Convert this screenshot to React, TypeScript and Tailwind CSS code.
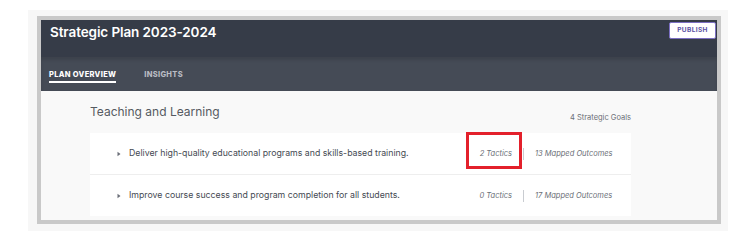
import React from "react";

function Tri() {
  return (
    <svg width="4" height="6" viewBox="0 0 4 6" className="shrink-0">
      <path d="M0.5 0.8 L3.5 3 L0.5 5.2 Z" fill="#6b6f78" />
    </svg>
  );
}

function Row({ text, tactics, outcomes, highlight }: { text: string; tactics: string; outcomes: string; highlight?: boolean }) {
  return (
    <div className="relative flex items-center h-[41px] pl-[27px] pr-[18px]">
      <Tri />
      <span className="ml-[8px] text-[8.75px] text-[#454a52] flex-1">{text}</span>
      <span className="w-[60px] text-right italic text-[7.5px] text-[#6b6f77]">{tactics}</span>
      <span className="mx-[11px] w-px h-[12px] bg-[#c9ccd1]" />
      <span className="w-[78px] italic text-[7.5px] text-[#6b6f77] whitespace-nowrap">{outcomes}</span>
      {highlight && (
        <div className="absolute left-[376px] top-[-1px] w-[56px] h-[37px] border-[3px] border-[#e3202b]" />
      )}
    </div>
  );
}

export default function App() {
  return (
    <div className="w-[743px] h-[241px] bg-white pt-[10px] pl-[28px]" style={{ fontFamily: "Inter, 'Noto Sans', sans-serif" }}>
      <div className="w-[700px] h-[221px] bg-[#f7f7f7] pt-[6px] pl-[9px]">
        <div className="w-[684px] h-[208px] border-4 border-[#c9c9c9] bg-[#f9f9f9] overflow-hidden flex flex-col">
          <div className="h-[37px] bg-[#363c48] flex items-start justify-between pl-[9px] pr-px shrink-0">
            <div className="mt-[1px] text-white font-semibold text-[13.5px] leading-[22px] tracking-[-0.1px]">Strategic Plan 2023-2024</div>
            <div className="mt-[2px] w-[47px] h-[17px] bg-white border border-[#7b6fc2] rounded-[2px] flex items-center justify-center text-[6.5px] font-bold text-[#5b4fa3] tracking-[0.4px]">
              PUBLISH
            </div>
          </div>
          <div className="h-[34px] bg-[#454b56] flex items-center pl-[8px] gap-[28px] shrink-0 shadow-[inset_0_3px_3px_rgba(0,0,0,0.12)]">
            <div className="relative text-white text-[7.5px] font-extrabold tracking-[0.3px] pt-[2px]">
              PLAN OVERVIEW
              <div className="absolute left-0 right-0 top-[14px] h-[2px] bg-white" />
            </div>
            <div className="text-[#b9bcc3] text-[7.5px] font-extrabold tracking-[0.3px] pt-[2px]">INSIGHTS</div>
          </div>
          <div className="flex-1 pl-[49px] pr-[86px] pt-[13px]">
            <div className="flex items-end justify-between h-[16px]">
              <div className="text-[12px] text-[#555a61] leading-[16px]">Teaching and Learning</div>
              <div className="text-[7.5px] text-[#6b6f77] mb-[-3px]">4 Strategic Goals</div>
            </div>
            <div className="mt-[13px] bg-white">
              <Row text="Deliver high-quality educational programs and skills-based training." tactics="2 Tactics" outcomes="13 Mapped Outcomes" highlight />
              <div className="h-px bg-[#eeeeee]" />
              <Row text="Improve course success and program completion for all students." tactics="0 Tactics" outcomes="17 Mapped Outcomes" />
            </div>
          </div>
        </div>
      </div>
    </div>
  );
}
